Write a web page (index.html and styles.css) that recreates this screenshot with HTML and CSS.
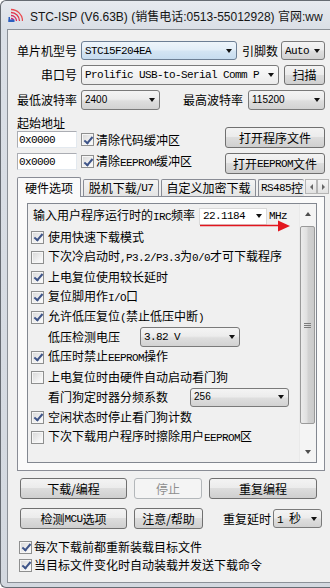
FILE: index.html
```html
<!DOCTYPE html>
<html>
<head>
<meta charset="utf-8">
<link rel="stylesheet" href="styles.css">
</head>
<body>
<div class="window">
  <div class="titlebar">
    <svg class="appicon" viewBox="0 0 15 15">
      <g fill="none" stroke-width="1.3">
        <path d="M3 10.5 A2.5 2.5 0 0 1 5.5 13" stroke="#c8237a"/>
        <path d="M3 7.5 A5.5 5.5 0 0 1 8.5 13" stroke="#dc2a5c"/>
        <path d="M3 4.5 A8.5 8.5 0 0 1 11.5 13" stroke="#e2334a"/>
        <path d="M3 1.5 A11.5 11.5 0 0 1 14.5 13" stroke="#ea4a50"/>
      </g>
      <rect x="0.5" y="11.5" width="6" height="2.5" fill="#2c5fc0"/>
      <rect x="0.5" y="9" width="1.5" height="5" fill="#2c5fc0"/>
    </svg>
    <span class="title">STC-ISP (V6.63B) (销售电话:0513-55012928) 官网:ww</span>
  </div>
  <div class="client">
    <div class="content">
      <div class="r r1">
        <span class="lbl">单片机型号</span>
        <div class="combo blue c-mcu"><span class="val m">STC15F204EA</span><span class="arr"></span></div>
        <span class="lbl2">引脚数</span>
        <div class="combo c-pin"><span class="val m">Auto</span><span class="arr"></span></div>
      </div>
      <div class="r r2">
        <span class="lbl">串口号</span>
        <div class="combo white c-com"><span class="val m">Prolific USB-to-Serial Comm P</span><span class="arr"></span></div>
        <div class="btn b-scan">扫描</div>
      </div>
      <div class="r r3">
        <span class="lbl">最低波特率</span>
        <div class="combo c-lo"><span class="val s">2400</span><span class="arr"></span></div>
        <span class="lbl lbl-hi">最高波特率</span>
        <div class="combo c-hi"><span class="val s">115200</span><span class="arr"></span></div>
      </div>
      <div class="addr">
        <div class="addr-left">
          <div class="addr-lbl">起始地址</div>
          <div class="arow">
            <div class="inp"><span class="m">0x0000</span></div>
            <span class="cb on"></span><span class="cbl">清除代码缓冲区</span>
          </div>
          <div class="arow arow2">
            <div class="inp"><span class="m">0x0000</span></div>
            <span class="cb on"></span><span class="cbl">清除<span class="m">EEPROM</span>缓冲区</span>
          </div>
        </div>
        <div class="addr-right">
          <div class="btn b-open">打开程序文件</div>
          <div class="btn b-open b-open2">打开<span class="m">EEPROM</span>文件</div>
        </div>
      </div>
      <div class="tabs">
        <div class="tab act">硬件选项</div>
        <div class="tab t2">脱机下载/<span class="m">U7</span></div>
        <div class="tab t3">自定义加密下载</div>
        <div class="tab t4"><span class="m">RS485</span>控</div>
        <div class="tabarrows"><span class="ta"><i class="la"></i></span><span class="ta"><i class="ra"></i></span></div>
      </div>
      <div class="panel">
        <div class="list">
          <div class="lc">
            <div class="li irc">
              <span>输入用户程序运行时的<span class="m">IRC</span>频率</span>
              <div class="combo flat c-irc"><span class="val m">22.1184</span><span class="arr"></span></div>
              <span class="m mhz">MHz</span>
              <svg class="redarrow" width="95" height="12" viewBox="0 0 95 12">
                <line x1="2" y1="5.5" x2="84" y2="5.5" stroke="#e3161e" stroke-width="1.6"/>
                <polygon points="80,0.5 92,6 80,11.5" fill="#e3161e"/>
              </svg>
            </div>
            <div class="li"><span class="cb on"></span><span>使用快速下载模式</span></div>
            <div class="li"><span class="cb"></span><span>下次冷启动时<span class="m">,P3.2/P3.3</span>为<span class="m">0/0</span>才可下载程序</span></div>
            <div class="li"><span class="cb on"></span><span>上电复位使用较长延时</span></div>
            <div class="li"><span class="cb on"></span><span>复位脚用作<span class="m">I/O</span>口</span></div>
            <div class="li"><span class="cb on"></span><span>允许低压复位<span class="m">(</span>禁止低压中断<span class="m">)</span></span></div>
            <div class="li ind"><span>低压检测电压</span><div class="combo c-lv"><span class="val m">3.82 V</span><span class="arr"></span></div></div>
            <div class="li"><span class="cb on"></span><span>低压时禁止<span class="m">EEPROM</span>操作</span></div>
            <div class="li"><span class="cb"></span><span>上电复位时由硬件自动启动看门狗</span></div>
            <div class="li ind"><span>看门狗定时器分频系数</span><div class="combo c-wd"><span class="val s">256</span><span class="arr"></span></div></div>
            <div class="li"><span class="cb on"></span><span>空闲状态时停止看门狗计数</span></div>
            <div class="li"><span class="cb"></span><span>下次下载用户程序时擦除用户<span class="m">EEPROM</span>区</span></div>
          </div>
          <div class="vscroll">
            <div class="sb-btn"><i class="up"></i></div>
            <div class="thumb"><span class="grip"></span></div>
            <div class="sb-fill"></div>
            <div class="sb-btn"><i class="down"></i></div>
          </div>
        </div>
      </div>
      <div class="brow brow1">
        <div class="btn b-wide">下载/编程</div>
        <div class="btn dis b-stop">停止</div>
        <div class="btn b-rep">重复编程</div>
      </div>
      <div class="brow brow2">
        <div class="btn b-wide">检测<span class="m">MCU</span>选项</div>
        <div class="btn b-help">注意/帮助</div>
        <span class="lbl-delay">重复延时</span>
        <div class="combo c-delay"><span class="val"><span class="m">1 </span>秒</span><span class="arr"></span></div>
      </div>
      <div class="crow crow1"><span class="cb on"></span><span>每次下载前都重新装载目标文件</span></div>
      <div class="crow"><span class="cb on"></span><span>当目标文件变化时自动装载并发送下载命令</span></div>
    </div>
  </div>
</div>
</body>
</html>
```
FILE: styles.css
```css
* { box-sizing: border-box; }
html, body { margin: 0; padding: 0; }
body {
  width: 330px; height: 588px; overflow: hidden; background: #ffffff;
  font: 12px/14px "Noto Sans CJK SC", "Noto Sans", sans-serif; color: #000;
}
.m { font-family: "Liberation Mono", "Noto Sans CJK SC", monospace; font-size: 11px; letter-spacing: -0.6px; }
.s { font-family: "Liberation Sans", sans-serif; font-size: 10px; }

.window {
  width: 350px; height: 588px;
  border: 1px solid #666b72; border-right: none; border-radius: 6px 0 0 6px;
  background: linear-gradient(#e7eaef, #dadfe6 28px, #d3d8df);
  display: flex; flex-direction: column;
}
.titlebar { height: 28px; flex: none; display: flex; align-items: center; padding-left: 7px; white-space: nowrap; overflow: hidden; }
.appicon { width: 15px; height: 15px; flex: none; }
.title { margin-left: 7px; font: 12px "Liberation Sans", "Noto Sans CJK SC", sans-serif; color: #151515; }

.client {
  margin-left: 6px; height: 554px; flex: none;
  border: 1px solid #8b9097; border-right: none;
  background: #f0f0f0; padding: 11px 0 0 9px;
}
.content { width: 308px; }

.r { display: flex; align-items: center; }
.r1 { height: 19px; margin-bottom: 5px; }
.r2 { height: 20px; margin-bottom: 5px; }
.r3 { height: 20px; }
.lbl { width: 60px; text-align: right; margin-right: 4px; flex: none; white-space: nowrap; }
.lbl2 { width: 34px; margin: 0 5px; flex: none; white-space: nowrap; }
.lbl-hi { margin-left: 23px; margin-right: 5px; }

.combo {
  display: flex; align-items: center; height: 19px; flex: none;
  border: 1px solid #7a7a7a; border-radius: 3px;
  background: linear-gradient(#f4f4f4, #ececec 45%, #dedede 55%, #d2d2d2);
  padding: 0 4px 0 3px;
}
.combo .val { flex: 1; overflow: hidden; white-space: nowrap; line-height: 16px; }
.combo.blue { border-color: #6d7f95; background: linear-gradient(#eef5fb, #e3eef8 45%, #d3e4f3 55%, #c7dcef); }
.combo.white { background: linear-gradient(#fafafa, #f3f3f3 50%, #ebebeb); }
.combo.flat { border: 1px solid #dadada; border-radius: 0; background: #ffffff; }
.arr { width: 0; height: 0; flex: none; border-left: 3.5px solid transparent; border-right: 3.5px solid transparent; border-top: 4px solid #111; }
.c-mcu { width: 156px; }
.c-pin { width: 44px; }
.c-com { width: 198px; height: 20px; }
.c-lo { width: 79px; height: 20px; }
.c-hi { width: 77px; height: 20px; }

.btn {
  display: flex; align-items: center; justify-content: center; flex: none; white-space: nowrap;
  height: 21px; border: 1px solid #707070; border-radius: 3px;
  background: linear-gradient(#f3f3f3, #ebebeb 50%, #dddddd 50%, #cfcfcf);
}
.btn.dis { border-color: #b3b7ba; background: #f4f4f4; color: #8e8e8e; }
.b-scan { width: 41px; height: 20px; margin-left: 5px; }

.addr { display: flex; height: 64px; }
.addr-left { padding-top: 6px; }
.addr-lbl { height: 14px; line-height: 14px; }
.arow { display: flex; align-items: center; height: 17px; margin-top: 1px; }
.arow2 { margin-top: 5px; }
.inp {
  width: 60px; height: 17px; flex: none; display: flex; align-items: center; padding-left: 1px;
  border: 1px solid; border-color: #abadb3 #e3e9ef #e3e9ef #abadb3; background: #fff;
}
.arow .cb { margin-left: 4px; }
.cbl { margin-left: 2px; white-space: nowrap; }
.addr-right { margin-left: auto; padding-top: 17px; }
.b-open { width: 100px; }
.b-open2 { margin-top: 5px; }

.cb {
  width: 13px; height: 13px; flex: none; position: relative;
  border: 1px solid #8e8f8f;
  background: linear-gradient(135deg, #d6d6d6, #f2f2f2 65%, #fdfdfd);
  box-shadow: inset 0 0 0 1px #f6f6f6;
}
.cb.on::after {
  content: ""; position: absolute; left: 3.5px; top: 0.5px; width: 3px; height: 7px;
  border: solid #3e5488; border-width: 0 2px 2px 0; transform: rotate(40deg);
}

.tabs { display: flex; align-items: flex-end; height: 19px; margin-top: 3px; position: relative; z-index: 1; }
.tab {
  height: 17px; flex: none; display: flex; align-items: center; justify-content: center; white-space: nowrap;
  border: 1px solid #898c95; border-bottom: none; border-radius: 2px 2px 0 0;
  background: linear-gradient(#f4f4f4, #e4e4e4); margin-right: 2px;
}
.tab.act { width: 64px; height: 20px; margin-bottom: -1px; background: #fafafa; }
.t2 { width: 76px; }
.t3 { width: 95px; }
.t4 { width: 46px; overflow: hidden; justify-content: flex-start; padding-left: 2px; margin-right: 0; border-right: none; }
.tabarrows { display: flex; align-self: flex-start; margin-top: 2px; margin-left: 1px; }
.ta {
  width: 12px; height: 15px; display: flex; align-items: center; justify-content: center;
  border: 1px solid #b5b5b5; background: linear-gradient(#f5f5f5, #e2e2e2);
}
.la { width: 0; height: 0; border-top: 3px solid transparent; border-bottom: 3px solid transparent; border-right: 3px solid #666; }
.ra { width: 0; height: 0; border-top: 3px solid transparent; border-bottom: 3px solid transparent; border-left: 3px solid #666; }

.panel { height: 275px; border: 1px solid #898c95; background: #fafafa; padding: 6px 7px 7px 9px; }
.list { height: 260px; border: 1px solid #828790; background: #f0f0f0; display: flex; }
.lc { flex: 1; position: relative; padding: 1px 0 0 3px; }
.li { height: 20px; display: flex; align-items: center; white-space: nowrap; }
.li .cb { margin-right: 4px; }
.irc { height: 22px; padding-left: 2px; position: relative; }
.c-irc { width: 68px; height: 17px; margin-left: 4px; }
.mhz { margin-left: 2px; }
.redarrow { position: absolute; left: 167px; top: 15px; }
.ind { padding-left: 17px; }
.c-lv { width: 100px; height: 20px; margin-left: 20px; }
.c-wd { width: 99px; height: 19px; margin-left: 22px; }

.vscroll { width: 17px; flex: none; display: flex; flex-direction: column; background: #f4f4f4; border-left: 1px solid #e9e9e9; }
.sb-btn { height: 20px; display: flex; align-items: center; justify-content: center; }
.up { width: 0; height: 0; border-left: 3.5px solid transparent; border-right: 3.5px solid transparent; border-bottom: 4px solid #4e4e4e; }
.down { width: 0; height: 0; border-left: 3.5px solid transparent; border-right: 3.5px solid transparent; border-top: 4px solid #4e4e4e; }
.thumb {
  height: 198px; margin: 2px 1px 0 0; border: 1px solid #9a9a9a; border-radius: 2px;
  background: linear-gradient(90deg, #ececec, #e0e0e0 45%, #d2d2d2 55%, #cbcbcb);
  display: flex; align-items: center; justify-content: center;
}
.grip { width: 7px; height: 5px; border-top: 1px solid #7c7c7c; border-bottom: 1px solid #7c7c7c; background: linear-gradient(#fff0 40%, #7c7c7c 40%, #7c7c7c 60%, #fff0 60%); }
.sb-fill { flex: 1; }

.brow { display: flex; align-items: center; height: 21px; padding-left: 3px; }
.brow1 { margin-top: 7px; }
.brow2 { margin-top: 9px; }
.b-wide { width: 107px; }
.b-stop { width: 68px; margin-left: 7px; }
.b-rep { width: 108px; margin-left: 7px; }
.b-help { width: 69px; margin-left: 7px; }
.lbl-delay { margin-left: 20px; white-space: nowrap; }
.c-delay { width: 49px; height: 19px; margin-left: 2px; }

.crow { display: flex; align-items: center; height: 18px; padding-left: 2px; white-space: nowrap; }
.crow .cb { margin-right: 2px; }
.crow1 { margin-top: 9px; }
```
